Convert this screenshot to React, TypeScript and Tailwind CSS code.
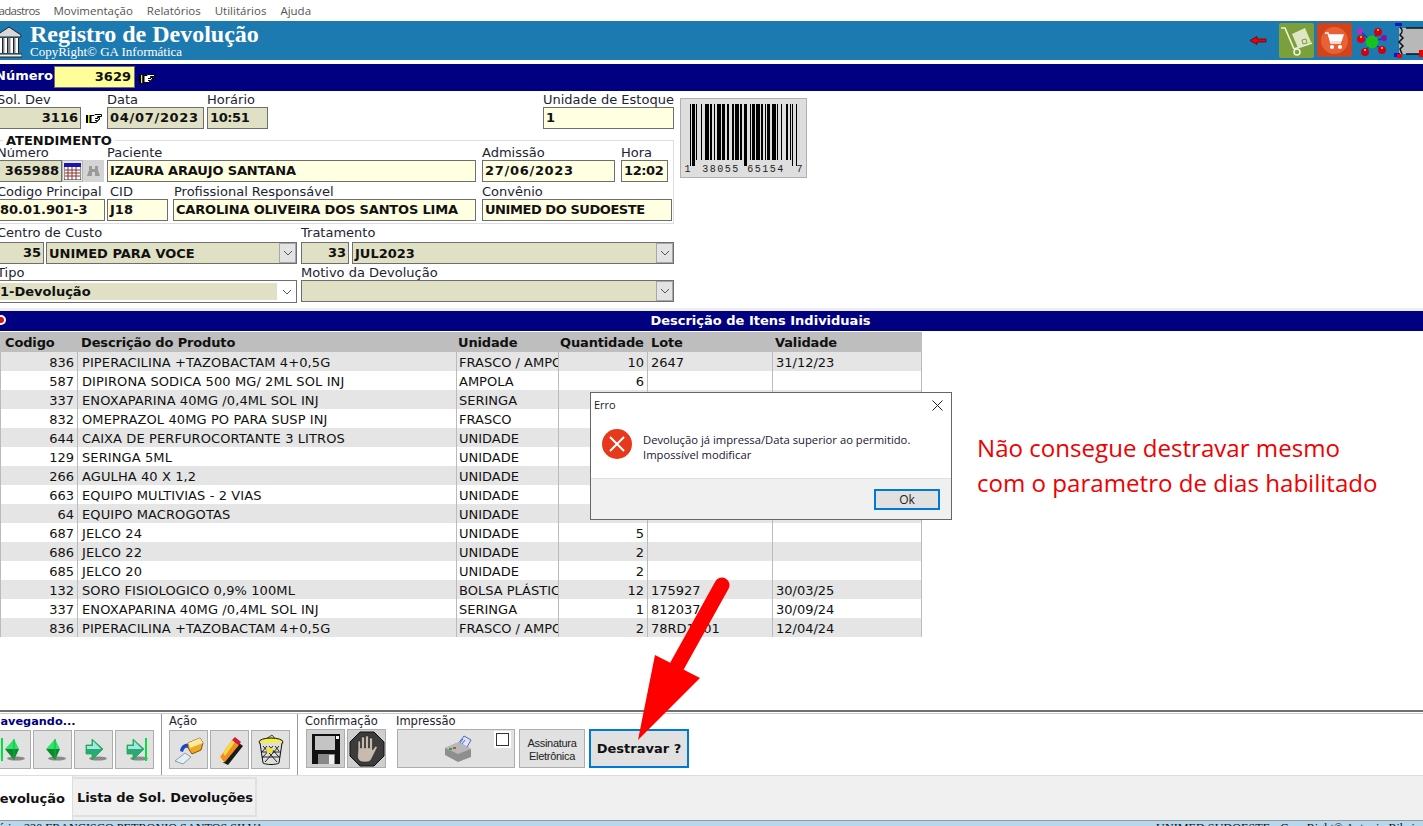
import type { ReactNode } from "react";

const rows = [
  ["836", "PIPERACILINA +TAZOBACTAM 4+0,5G", "FRASCO / AMPOLA", "10", "2647", "31/12/23"],
  ["587", "DIPIRONA SODICA 500 MG/ 2ML SOL INJ", "AMPOLA", "6", "", ""],
  ["337", "ENOXAPARINA 40MG /0,4ML SOL INJ", "SERINGA", "", "", ""],
  ["832", "OMEPRAZOL 40MG PO PARA SUSP INJ", "FRASCO", "", "", ""],
  ["644", "CAIXA DE PERFUROCORTANTE 3 LITROS", "UNIDADE", "", "", ""],
  ["129", "SERINGA 5ML", "UNIDADE", "", "", ""],
  ["266", "AGULHA 40 X 1,2", "UNIDADE", "", "", ""],
  ["663", "EQUIPO MULTIVIAS - 2 VIAS", "UNIDADE", "", "", ""],
  ["64", "EQUIPO MACROGOTAS", "UNIDADE", "", "", ""],
  ["687", "JELCO 24", "UNIDADE", "5", "", ""],
  ["686", "JELCO 22", "UNIDADE", "2", "", ""],
  ["685", "JELCO 20", "UNIDADE", "2", "", ""],
  ["132", "SORO FISIOLOGICO 0,9% 100ML", "BOLSA PLÁSTICA", "12", "175927", "30/03/25"],
  ["337", "ENOXAPARINA 40MG /0,4ML SOL INJ", "SERINGA", "1", "812037", "30/09/24"],
  ["836", "PIPERACILINA +TAZOBACTAM 4+0,5G", "FRASCO / AMPOLA", "2", "78RD1001", "12/04/24"],
];

function Label({ children, className = "", lead = "leading-[15px]" }: { children: ReactNode; className?: string; lead?: string }) {
  return <div className={`h-[15px] whitespace-nowrap text-[13px] text-[#1c2430] ${lead} ${className}`}>{children}</div>;
}

function SmallLabel({ children, className = "" }: { children: ReactNode; className?: string }) {
  return <div className={`h-[15px] whitespace-nowrap text-[11.5px] leading-[15px] text-[#1c2430] ${className}`}>{children}</div>;
}

function Box({ children, className = "" }: { children?: ReactNode; className?: string }) {
  return (
    <div className={`flex items-center overflow-hidden border border-[#6e6e6e] px-[2px] text-[13px] font-bold whitespace-nowrap text-[#111] ${className}`}>
      {children}
    </div>
  );
}

function Chevron() {
  return (
    <div className="flex h-full w-[17px] shrink-0 items-center justify-center border border-[#a8a8a8] bg-[#e3e3e3]">
      <svg width="10" height="6" viewBox="0 0 10 6" fill="none" stroke="#555">
        <path d="M1 1l4 4 4-4" />
      </svg>
    </div>
  );
}

function Hand() {
  return (
    <svg width="16" height="11" viewBox="0 0 16 11">
      <path d="M5 2.500h3l1-1h6.500v2h-4v1h2v2h-1v1h-1v1h-1v1H5z" fill="#fff" stroke="#000" />
      <rect x="0" y="2" width="2" height="8" fill="#000" />
      <rect x="2" y="2" width="1.500" height="8" fill="#e8f020" />
      <rect x="3.500" y="2" width="1.500" height="8" fill="#000" />
      <path d="M9 5.500h3M9 7.500h2" stroke="#000" />
    </svg>
  );
}

function Bank() {
  return (
    <svg width="26" height="34" viewBox="0 0 26 34" className="-ml-[4px] mt-[3px]">
      <path d="M1 10L13 2l12 8v2H1z" fill="#d8d8d8" stroke="#222" />
      <rect x="3" y="13" width="20" height="15" fill="#888" />
      <path d="M5 13v15M10 13v15M16 13v15M21 13v15" stroke="#fff" strokeWidth="3" />
      <path d="M6.500 13v15M11.500 13v15M17.500 13v15M22.500 13v15" stroke="#222" />
      <path d="M0 29h26v3H0z" fill="#eee" stroke="#222" />
    </svg>
  );
}

function HeaderIcons() {
  return (
    <div className="flex items-center">
      <svg width="17" height="9" viewBox="0 0 17 9" className="mr-[12px]">
        <path d="M0 4.500l7-4v2.500h9v3H7v2.500z" fill="#f00000" stroke="#500" strokeWidth=".7" />
      </svg>
      <div className="mr-[3px] flex h-[35px] w-[35px] items-center justify-center rounded-[2px] bg-[#7b9f3b]">
        <svg width="33" height="33" viewBox="0 0 33 33" fill="none" stroke="#eef3dc" strokeWidth="1.600">
          <path d="M1 4h4l9 21" />
          <circle cx="17" cy="28" r="3" />
          <path d="M14 25l18-6" />
          <path d="M12 10l13-6 6 14-13 6z" fill="#dfe6c4" stroke="none" />
          <path d="M22 16l4-1 1 4-4 1z" stroke="#7b9f3b" strokeWidth="1" />
        </svg>
      </div>
      <div className="mr-[4px] flex h-[34px] w-[35px] items-center justify-center rounded-[3px] bg-[#d2431c]">
        <div className="flex h-[27px] w-[27px] items-center justify-center rounded-full bg-[#ea6136]">
          <svg width="19" height="19" viewBox="0 0 19 19" fill="none" stroke="#fff" strokeWidth="1.400">
            <path d="M0 2h3l3 10h10" />
            <path d="M4 4h14l-2 6H6z" fill="#fff" />
            <circle cx="7" cy="16" r="1.400" fill="#fff" />
            <circle cx="15" cy="16" r="1.400" fill="#fff" />
          </svg>
        </div>
      </div>
      <svg width="34" height="34" viewBox="0 0 34 34" className="mr-[4px]">
        <path d="M4 8l12 11M5 16l11 3M9 29l7-10M26 27L16 19M22 9l-6 10M28 15l-12 4" stroke="#2030d0" strokeWidth="1.500" />
        <circle cx="4" cy="8" r="2.800" fill="#d020c0" />
        <circle cx="28" cy="15" r="3" fill="#8a10a0" />
        <circle cx="22" cy="9" r="4" fill="#d00010" />
        <circle cx="5" cy="16" r="4" fill="#e00010" />
        <circle cx="16" cy="19" r="6.500" fill="#18c020" />
        <circle cx="9" cy="29" r="4" fill="#d00010" />
        <circle cx="26" cy="27" r="4" fill="#d00010" />
        <path d="M21 7h2M4 14h2M8 27h2M25 25h2" stroke="#f0e040" strokeWidth="1.500" />
      </svg>
      <svg width="29" height="36" viewBox="0 0 29 36">
        <rect x="5" y="6" width="24" height="26" fill="#b8b8b8" />
        <path d="M1 1h7v3H1zM0 31h6v4H0z" fill="#1414c8" />
        <path d="M6 5c3 3 3 5 0 8l3 3-4 4 4 4-3 3 2 5M12 6h17M12 32h17" fill="none" stroke="#111" strokeWidth="1.500" />
        <path d="M3 32h5v4H3zM25 28h4v7h-4z" fill="#ee0000" />
      </svg>
    </div>
  );
}

function Barcode() {
  const bars = [1, 1, 2, 1, 1, 3, 1, 2, 3, 1, 2, 1, 1, 2, 3, 1, 2, 2, 1, 3, 1, 1, 3, 1, 2, 1, 3, 2, 1, 1, 2, 1, 3, 1, 2, 1, 1, 1, 2, 2, 3, 1, 1, 2, 1, 3, 2, 1, 1, 1, 1, 2, 1];
  let x = 0;
  return (
    <div className="ml-[6px] mt-[7px] flex h-[80px] w-[127px] shrink-0 flex-col items-center border border-[#b0b0b0] bg-[#dedede] pt-[5px]">
      <svg width="107" height="62" viewBox="0 0 86 62" preserveAspectRatio="none" shapeRendering="crispEdges" className="shrink-0">
        {bars.map((w, i) => {
          const tall = i < 4 || i > 48 || (i > 24 && i < 28);
          const bar = i % 2 === 0 ? <rect key={i} x={x} y="0" width={w} height={tall ? 62 : 56} fill="#000" /> : null;
          x += w;
          return bar;
        })}
      </svg>
      <div className="-mt-[2px] flex w-[118px] justify-between font-['Liberation_Mono',monospace] text-[10px] leading-[11px] text-[#222]">
        <span>1</span>
        <span className="tracking-[1.500px]">38055 65154</span>
        <span>7</span>
      </div>
    </div>
  );
}

function Calendar() {
  return (
    <div className="flex h-[22px] w-[21px] shrink-0 items-center justify-center border border-[#b5b5b5] bg-[#e8e8e8]">
      <svg width="17" height="17" viewBox="0 0 17 17">
        <rect width="17" height="17" fill="#fff" stroke="#222" />
        <rect width="17" height="4" fill="#1818b0" />
        <path d="M1 7h15M1 10h15M1 13h15M4 4v13M8 4v13M12 4v13" stroke="#8a3030" />
      </svg>
    </div>
  );
}

function Binoculars() {
  return (
    <div className="flex h-[22px] w-[21px] shrink-0 items-center justify-center bg-[#d4d4d4]">
      <svg width="13" height="12" viewBox="0 0 13 12" fill="#9a9a9a">
        <path d="M2 1h3v3h3V1h3v4l2 6H8V7H5v4H0l2-6z" />
      </svg>
    </div>
  );
}

function NavIcon({ dir, bar }: { dir: "left" | "right"; bar?: boolean }) {
  return (
    <svg width="32" height="32" viewBox="0 0 32 32">
      <ellipse cx="20" cy="24.500" rx="9" ry="2" fill="#8a8a8a" />
      {dir === "left" ? (
        <>
          <path d="M9 15l9-10 5 10z" fill="#2ee468" />
          <path d="M9 15l9 11 5-11z" fill="#0a8a2c" />
          <path d="M18 5v21" stroke="#12b040" />
          {bar && <rect x="5" y="4" width="2" height="23" fill="#00e040" />}
        </>
      ) : (
        <>
          <path d="M8 11h6V5l11 10-11 11v-6H8z" fill="#2aa878" stroke="#10b040" strokeWidth=".8" />
          <path d="M9 12h6V7l8 8H9z" fill="#a4e8e0" />
          {bar && <rect x="26" y="4" width="2" height="23" fill="#00e040" />}
        </>
      )}
    </svg>
  );
}

function TipIcon() {
  return (
    <svg width="30" height="30" viewBox="0 0 30 30">
      <path d="M1 26l10-8 6 4-8 7z" fill="#dff0fa" stroke="#999" />
      <path d="M6 16c1-6 5-8 9-7l-1 4c-3-1-4 1-5 4z" fill="#1c48c8" />
      <path d="M14 8l12-5 3 5-2 7-9 4-4-6z" fill="#f0a820" stroke="#7a5510" />
      <path d="M14 8l12-5 3 5-13 5z" fill="#ffe9a0" />
    </svg>
  );
}

function Pencil() {
  return (
    <svg width="30" height="30" viewBox="0 0 30 30">
      <path d="M5 26L20 5l8 6-15 19z" fill="#1a1a1a" />
      <path d="M5 22L17 5l7 5-14 17z" fill="#f09020" />
      <path d="M8 18l9-13 3 2-10 14z" fill="#f8d840" />
      <path d="M17 5l3-3 6 5-2 3z" fill="#d81840" />
      <path d="M5 22l5 5-6 1z" fill="#f4e0a0" />
    </svg>
  );
}

function Trash() {
  return (
    <svg width="28" height="32" viewBox="0 0 28 32">
      <path d="M6 7l9-6 6 7z" fill="#f4e040" stroke="#444" />
      <ellipse cx="14" cy="8" rx="12" ry="4" fill="#f4ec50" stroke="#111" />
      <path d="M3 9l3 20c3 2 13 2 16 0l3-20" fill="#ddd" stroke="#111" />
      <path d="M6 12l14 16M12 12l10 11M18 12l4 5M22 12L8 28M16 12L5 24M10 12l-5 6M4 18h20M5 23h18" stroke="#111" strokeWidth=".9" />
      <path d="M9 14h8l-2 5H10z" fill="#f0e040" />
    </svg>
  );
}

function Disk() {
  return (
    <svg width="28" height="30" viewBox="0 0 28 30">
      <rect width="28" height="30" fill="#111" />
      <rect x="3" y="2" width="20" height="14" fill="#c4c4c4" />
      <rect x="24" y="2" width="3" height="3" fill="#fff" />
      <rect x="6" y="20" width="17" height="10" fill="#888" />
      <rect x="17" y="21" width="5" height="9" fill="#eee" />
    </svg>
  );
}

function Stop() {
  return (
    <svg width="36" height="36" viewBox="0 0 36 36">
      <path d="M11 1h14l10 10v14L25 35H11L1 25V11z" fill="#3c3c3c" stroke="#111" />
      <path d="M9 19V10h2.500v7h1V6h3v11h1V5h3v12h1V7h3v12l3-4 2 1-5 10c-1 3-3 5-6 5h-3c-4 0-6-3-6-6z" fill="#c6bbae" stroke="#222" strokeWidth=".6" />
    </svg>
  );
}

function Printer() {
  return (
    <svg width="28" height="28" viewBox="0 0 28 28" className="ml-[3px]">
      <path d="M14 9l6-8 7 4-5 9z" fill="#dfe4ff" stroke="#5566aa" />
      <path d="M16 8l3-4M18 9l3-4" stroke="#4466dd" />
      <path d="M1 13l14-6 12 7v8l-13 5-13-7z" fill="#8e8e8e" />
      <path d="M1 13l14-6 12 7-13 5z" fill="#b8b8b8" />
      <rect x="5" y="13" width="3" height="2" fill="#30a040" />
      <rect x="9" y="12" width="3" height="2" fill="#c05050" />
    </svg>
  );
}

function ToolButton({ children, className = "" }: { children?: ReactNode; className?: string }) {
  return (
    <div className={`flex h-[39px] w-[39px] shrink-0 items-center justify-center border border-[#adadad] ${className || "bg-[#e1e1e1]"}`}>
      {children}
    </div>
  );
}

export default function App() {
  return (
    <div className="relative flex h-[826px] w-[1423px] flex-col overflow-hidden bg-white font-['DejaVu_Sans',sans-serif]">
      {/* menu */}
      <div className="flex h-[21px] shrink-0 items-center gap-[14px] font-['Open_Sans',sans-serif] text-[11.5px] text-[#555]">
        <span className="-ml-[8px] tracking-[-0.7px]">Cadastros</span>
        <span>Movimentação</span>
        <span>Relatórios</span>
        <span>Utilitários</span>
        <span>Ajuda</span>
      </div>

      {/* title */}
      <div className="flex h-[39px] shrink-0 items-start justify-between bg-[#1c7ab0] pt-px">
        <div className="flex">
          <Bank />
          <div className="ml-[8px] font-['Liberation_Serif',serif] text-white">
            <div className="text-[24px] leading-[24px] font-bold">Registro de Devolução</div>
            <div className="text-[13px] leading-[12px]">CopyRight© GA Informática</div>
          </div>
        </div>
        <HeaderIcons />
      </div>

      <div className="mt-[4px] flex h-[27px] shrink-0 items-start bg-[#000080] pt-[2px]">
        <span className="-ml-[5px] w-[59px] pt-[2px] text-[13px] leading-[15px] font-bold text-white">Número</span>
        <div className="flex h-[22px] w-[81px] items-center justify-end border border-[#6e6e6e] bg-[#ffff99] px-[3px] text-[13px] font-bold text-[#111]">3629</div>
        <div className="ml-[4px] pt-[7px]"><Hand /></div>
      </div>

      {/* form */}
      <div className="flex h-[217px] shrink-0">
        <div className="w-[674px] shrink-0">
          <div className="flex h-[49px] items-start pt-px">
            <div className="-ml-[3px] w-[84px]">
              <Label>Sol. Dev</Label>
              <Box className="h-[22px] justify-end bg-[#e0e0c4]">3116</Box>
            </div>
            <div className="flex w-[26px] justify-center pt-[21px]"><Hand /></div>
            <div className="w-[97px]">
              <Label>Data</Label>
              <Box className="h-[22px] bg-[#e0e0c4] tracking-[0.7px]">04/07/2023</Box>
            </div>
            <div className="ml-[3px] w-[61px]">
              <Label>Horário</Label>
              <Box className="h-[22px] bg-[#e0e0c4] tracking-[-0.4px]">10:51</Box>
            </div>
            <div className="ml-auto w-[131px]">
              <Label>Unidade de Estoque</Label>
              <Box className="h-[22px] bg-[#ffffe1]">1</Box>
            </div>
          </div>

          {/* atendimento */}
          <div className="relative -ml-px h-[84px] border border-[#dddddd] pt-[4px] pb-[2px]">
            <span className="absolute -top-[8px] left-[3px] bg-white px-[3px] text-[13px] leading-[15px] font-bold text-[#111]">ATENDIMENTO</span>
            <div className="flex h-[37px]">
              <div className="-ml-[3px] w-[65px]">
                <Label>Número</Label>
                <Box className="h-[22px] justify-end bg-[#e0e0c4]">365988</Box>
              </div>
              <div className="flex items-end"><Calendar /><Binoculars /></div>
              <div className="ml-[3px] w-[369px]">
                <Label>Paciente</Label>
                <Box className="h-[22px] bg-[#ffffe1] tracking-[-0.15px]">IZAURA ARAUJO SANTANA</Box>
              </div>
              <div className="ml-[6px] w-[133px]">
                <Label>Admissão</Label>
                <Box className="h-[22px] bg-[#ffffe1] tracking-[0.7px]">27/06/2023</Box>
              </div>
              <div className="ml-[6px] w-[47px]">
                <Label>Hora</Label>
                <Box className="h-[22px] bg-[#ffffe1] tracking-[-0.4px]">12:02</Box>
              </div>
            </div>
            <div className="mt-[2px] flex h-[37px]">
              <div className="-ml-[3px] w-[108px]">
                <Label>Codigo Principal</Label>
                <Box className="h-[22px] bg-[#ffffe1]">80.01.901-3</Box>
              </div>
              <div className="ml-[2px] w-[61px]">
                <Label className="pl-[3px]">CID</Label>
                <Box className="h-[22px] bg-[#ffffe1]">J18</Box>
              </div>
              <div className="ml-[5px] w-[303px]">
                <Label className="pl-[1px]">Profissional Responsável</Label>
                <Box className="h-[22px] bg-[#ffffe1] tracking-[-0.18px]">CAROLINA OLIVEIRA DOS SANTOS LIMA</Box>
              </div>
              <div className="ml-[6px] w-[190px]">
                <Label>Convênio</Label>
                <Box className="h-[22px] bg-[#ffffe1] tracking-[-0.44px]">UNIMED DO SUDOESTE</Box>
              </div>
            </div>
          </div>

          <div className="mt-[3px] flex">
            <div className="-ml-[3px] w-[47px]">
              <Label lead="leading-[11px]">Centro de Custo</Label>
              <Box className="h-[22px] justify-end bg-[#e0e0c4]">35</Box>
            </div>
            <div className="ml-[2px] w-[251px] pt-[15px]">
              <Box className="h-[22px] justify-between bg-[#e0e0c4] pr-0"><span className="pt-[2px]">UNIMED PARA VOCE</span><Chevron /></Box>
            </div>
            <div className="ml-[4px] w-[48px]">
              <Label lead="leading-[11px]">Tratamento</Label>
              <Box className="h-[22px] justify-end bg-[#e0e0c4]">33</Box>
            </div>
            <div className="ml-[3px] w-[322px] pt-[15px]">
              <Box className="h-[22px] justify-between bg-[#e0e0c4] pr-0"><span className="pt-[2px]">JUL2023</span><Chevron /></Box>
            </div>
          </div>

          <div className="mt-px flex">
            <div className="-ml-[3px] w-[300px]">
              <Label>Tipo</Label>
              <div className="flex h-[23px] items-center border border-[#6e6e6e] bg-white text-[13px] font-bold text-[#111]">
                <div className="flex h-[17px] flex-1 items-center bg-[#e0e0c4] pl-[2px]">1-Devolução</div>
                <div className="flex w-[19px] justify-center">
                  <svg width="10" height="6" viewBox="0 0 10 6" fill="none" stroke="#555"><path d="M1 1l4 4 4-4" /></svg>
                </div>
              </div>
            </div>
            <div className="ml-[4px] w-[373px]">
              <Label>Motivo da Devolução</Label>
              <Box className="h-[22px] justify-end bg-[#e0e0c4] pr-0"><Chevron /></Box>
            </div>
          </div>
        </div>
        <Barcode />
      </div>

      <div className="h-[3px] shrink-0 bg-[#eeeeee]" />

      {/* items */}
      <div className="relative flex h-[20px] shrink-0 items-center justify-center bg-[#000080] pl-[98px] text-[13px] font-bold text-white">
        <span className="absolute -left-[4px] top-[4px] h-[10px] w-[10px] rounded-full border-2 border-white bg-[#d01818]" />
        Descrição de Itens Individuais
      </div>

      <div className="mt-px w-[922px] shrink-0 text-[13px] text-[#111]">
        <div className="flex h-[20px] bg-[#bebebe] text-[13px] leading-[22px] font-bold tracking-[-0.15px]">
          <div className="w-[77px] pl-[5px]">Codigo</div>
          <div className="w-[379px] pl-[4px]">Descrição do Produto</div>
          <div className="w-[102px] pl-[2px]">Unidade</div>
          <div className="w-[89px] pl-[2px] whitespace-nowrap">Quantidade</div>
          <div className="w-[125px] pl-[4px]">Lote</div>
          <div className="flex-1 pl-[3px]">Validade</div>
        </div>
        {rows.map((r, i) => (
          <div key={i} className={`flex h-[19px] leading-[22px] ${i % 2 === 0 ? "bg-[#e5e5e5]" : "bg-white"}`}>
            <div className="h-full w-[77px] border-l border-[#bbbbbb] pr-[3px] text-right">{r[0]}</div>
            <div className="h-full w-[379px] border-l border-[#bbbbbb] pl-[4px] tracking-[0.1px] whitespace-nowrap">{r[1]}</div>
            <div className="h-full w-[102px] overflow-hidden border-l border-[#bbbbbb] pl-[2px] whitespace-nowrap">{r[2]}</div>
            <div className="h-full w-[89px] border-l border-[#bbbbbb] pr-[3px] text-right">{r[3]}</div>
            <div className="h-full w-[125px] border-l border-[#bbbbbb] pl-[3px]">{r[4]}</div>
            <div className="h-full flex-1 border-x border-[#bbbbbb] pl-[3px]">{r[5]}</div>
          </div>
        ))}
      </div>

      <div className="flex-1" />

      {/* toolbar */}
      <div className="h-[3px] shrink-0 border-t-2 border-[#707070]" />
      <div className="flex h-[62px] shrink-0 border-t border-[#cccccc]">
        <div className="w-[162px] shrink-0 border-r border-[#999]">
          <div className="-ml-[9px] h-[15px] text-[11.3px] leading-[15px] font-bold whitespace-nowrap text-[#000080]">Navegando...</div>
          <div className="-ml-[8px] flex gap-[2px] pt-px">
            <ToolButton><NavIcon dir="left" bar /></ToolButton>
            <ToolButton><NavIcon dir="left" /></ToolButton>
            <ToolButton><NavIcon dir="right" /></ToolButton>
            <ToolButton><NavIcon dir="right" bar /></ToolButton>
          </div>
        </div>
        <div className="w-[136px] shrink-0 border-r border-[#999] pl-[7px]">
          <SmallLabel>Ação</SmallLabel>
          <div className="flex gap-[2px] pt-px">
            <ToolButton><TipIcon /></ToolButton>
            <ToolButton><Pencil /></ToolButton>
            <ToolButton><Trash /></ToolButton>
          </div>
        </div>
        <div className="w-[99px] shrink-0 pl-[8px]">
          <SmallLabel className="-ml-px">Confirmação</SmallLabel>
          <div className="flex gap-[2px]">
            <ToolButton className="bg-[#cfcfcf]"><Disk /></ToolButton>
            <ToolButton className="bg-[#cfcfcf]"><Stop /></ToolButton>
          </div>
        </div>
        <div className="shrink-0">
          <SmallLabel className="-ml-px">Impressão</SmallLabel>
          <div className="flex gap-[4px]">
            <div className="relative flex h-[39px] w-[118px] items-center justify-center border border-[#adadad] bg-[#e1e1e1]">
              <Printer />
              <span className="absolute top-[1px] right-[3px] flex h-[17px] w-[17px] items-center justify-center bg-white">
                <span className="h-[13px] w-[13px] border border-[#333]" />
              </span>
            </div>
            <div className="flex h-[39px] w-[66px] items-center justify-center border border-[#adadad] bg-[#e1e1e1] pt-[2px] text-center font-['Liberation_Sans',sans-serif] text-[11px] leading-[13px] tracking-[-0.3px] text-[#222]">
              Assinatura
              <br />
              Eletrônica
            </div>
            <div className="flex h-[39px] w-[100px] items-center justify-center border-2 border-[#0078d7] bg-[#e1e1e1] text-[13px] font-bold text-[#111]">
              Destravar ?
            </div>
          </div>
        </div>
      </div>

      {/* tabs */}
      <div className="flex h-[45px] shrink-0 border-t border-[#dddddd] bg-[#f0f0f0]">
        <div className="flex w-[73px] items-center justify-end border-r border-[#ddd] bg-white pr-[7px] pt-[1px] text-[13px] font-bold whitespace-nowrap text-[#111]">
          Devolução
        </div>
        <div className="mt-[1px] flex h-[40px] w-[184px] items-center justify-center border-2 border-l-0 border-[#e0e0e0] pt-[2px] pl-[2px] text-[13px] font-bold tracking-[-0.12px] whitespace-nowrap text-[#111]">
          Lista de Sol. Devoluções
        </div>
      </div>

      {/* status */}
      <div className="flex h-[6px] shrink-0 justify-between overflow-hidden border-t border-[#999] bg-[#b5d8ee] font-['Liberation_Serif',serif] text-[12.2px] leading-[14px] whitespace-nowrap text-[#111]">
        <span className="-ml-[21px]">Usuário: 220 FRANCISCO PETRONIO SANTOS SILVA</span>
        <span className="-mr-[2px]">UNIMED SUDOESTE - CopyRight© Antonio Ribeiro</span>
      </div>

      {/* dialog */}
      <div className="absolute top-[392px] left-[590px] flex h-[128px] w-[362px] flex-col border border-[#666] bg-white font-['Open_Sans',sans-serif] text-[#1b1430]">
        <div className="flex h-[25px] items-center justify-between pl-[3px] pr-[8px] text-[11px] text-[#222]">
          Erro
          <svg width="11" height="11" viewBox="0 0 11 11" stroke="#222" fill="none"><path d="M.5.5l10 10M10.500.5l-10 10" /></svg>
        </div>
        <div className="flex h-[60px] items-start pl-[11px] pt-[11px]">
          <div className="relative flex h-[30px] w-[30px] shrink-0 items-center justify-center rounded-full bg-[#e6391b]">
            <svg width="16" height="16" viewBox="0 0 16 16" stroke="#fff" strokeWidth="2" fill="none"><path d="M1 1l14 14M15 1L1 15" /></svg>
          </div>
          <div className="ml-[11px] pt-[3px] text-[11.25px] leading-[15px]">
            Devolução já impressa/Data superior ao permitido.
            <br />
            Impossível modificar
          </div>
        </div>
        <div className="flex flex-1 items-start justify-end border-t border-[#dfdfdf] bg-[#f0f0f0] pt-[10px] pr-[11px]">
          <div className="flex h-[21px] w-[66px] items-center justify-center border-2 border-[#0078d7] bg-[#e1e1e1] text-[12px] text-[#222]">Ok</div>
        </div>
      </div>

      {/* annotation */}
      <div className="absolute top-[430px] left-[977px] font-['Open_Sans',sans-serif] text-[24.1px] leading-[35px] whitespace-nowrap text-[#f00000]">
        Não consegue destravar mesmo
        <br />
        com o parametro de dias habilitado
      </div>
      <svg className="absolute top-[575px] left-[630px]" width="105" height="170" viewBox="630 575 105 170">
        <path d="M722 585L677 666" stroke="#ff0000" strokeWidth="15" strokeLinecap="round" />
        <path d="M655 655L700 678L638 740z" fill="#ff0000" />
      </svg>
    </div>
  );
}
